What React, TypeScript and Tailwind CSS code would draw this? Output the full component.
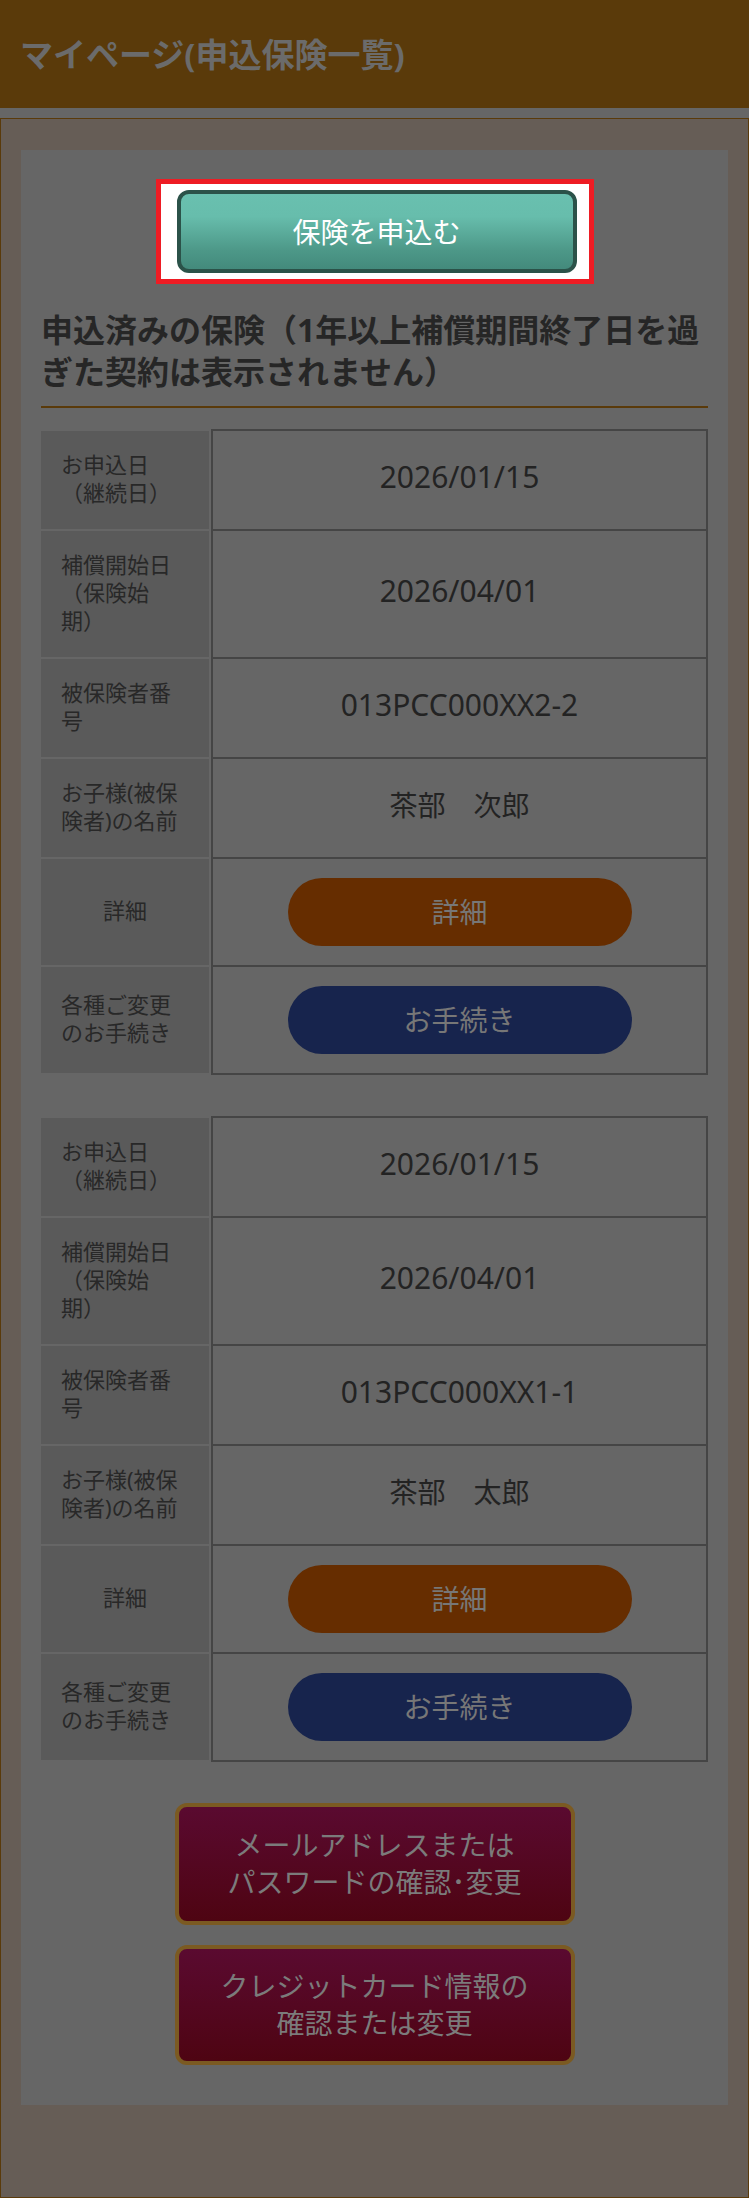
import React from "react";

type Rec = { date: string; start: string; id: string; name: string };

const records: Rec[] = [
  { date: "2026/01/15", start: "2026/04/01", id: "013PCC000XX2-2", name: "茶部　次郎" },
  { date: "2026/01/15", start: "2026/04/01", id: "013PCC000XX1-1", name: "茶部　太郎" },
];

function Row({
  label,
  centerLabel,
  last,
  children,
}: {
  label: string;
  centerLabel?: boolean;
  last?: boolean;
  children: React.ReactNode;
}) {
  return (
    <div className="flex">
      <div
        className={`w-[168px] shrink-0 mt-[2px] ${last ? "mb-[2px]" : ""} bg-[#5a5a5a] px-[20px] pt-[19px] pb-[23px] text-[22px] leading-[28px] text-[#282828] flex flex-col justify-center ${centerLabel ? "text-center" : "text-left"}`}
      >
        {label}
      </div>
      <div
        className={`ml-[2px] flex-1 border-x-2 border-t-2 ${last ? "border-b-2" : ""} border-[#454545] bg-[#666666] flex items-center justify-center px-[20px] pt-[19px] pb-[19px]`}
      >
        {children}
      </div>
    </div>
  );
}

function Val({ children, small }: { children: React.ReactNode; small?: boolean }) {
  return (
    <span className={`${small ? "text-[28px]" : "text-[30px]"} leading-none text-[#232323] pb-[6px]`}>
      {children}
    </span>
  );
}

function Table({ r }: { r: Rec }) {
  return (
    <div className="flex flex-col">
      <Row label="お申込日（継続日）">
        <Val>{r.date}</Val>
      </Row>
      <Row label="補償開始日（保険始期）">
        <Val>{r.start}</Val>
      </Row>
      <Row label="被保険者番号">
        <Val>{r.id}</Val>
      </Row>
      <Row label="お子様(被保険者)の名前">
        <Val small>{r.name}</Val>
      </Row>
      <Row label="詳細" centerLabel>
        <div className="w-[344px] h-[68px] shrink-0 rounded-full bg-[#662d00] flex items-center justify-center text-[28px] text-[#777777]">
          詳細
        </div>
      </Row>
      <Row label="各種ご変更のお手続き" last>
        <div className="w-[344px] h-[68px] shrink-0 rounded-full bg-[#17244d] flex items-center justify-center text-[28px] text-[#777777]">
          お手続き
        </div>
      </Row>
    </div>
  );
}

export default function App() {
  return (
    <div
      className="w-[749px] bg-[#666666] [text-spacing-trim:space-all]"
      style={{ fontFamily: '"Noto Sans", "Noto Sans CJK JP", sans-serif' }}
    >
      <header className="h-[108px] bg-[#5a3a0a] flex items-center px-[20px]">
        <h1 className="text-[33px] font-bold leading-none text-[#6b6b6b]">マイページ(申込保険一覧)</h1>
      </header>
      <div className="h-[10px] bg-[#666666]" />
      <div className="border border-[#5a3a0a] bg-[#665d56] px-[20px] pt-[31px] pb-[92px]">
        <div className="bg-[#666666] px-[20px] pt-[29px] pb-[40px]">
          <div className="flex justify-center">
            <div className="border-[5px] border-[#ee1c24] bg-white pl-[16px] pr-[12px] py-[6px]">
              <div className="w-[400px] h-[83px] rounded-[12px] border-[4px] border-[#2b5249] bg-[linear-gradient(to_bottom,#69c0af_0%,#67bdac_30%,#4d9888_75%,#438a7c_100%)] flex items-center justify-center text-[28px] text-white">
                保険を申込む
              </div>
            </div>
          </div>
          <h2 className="mt-[25px] pb-[13px] border-b-2 border-[#5a3a0a] text-[32px] leading-[42px] font-bold text-[#262626]">
            申込済みの保険（1年以上補償期間終了日を過ぎた契約は表示されません）
          </h2>
          <div className="mt-[21px] flex flex-col gap-[41px]">
            {records.map((r, i) => (
              <Table key={i} r={r} />
            ))}
          </div>
          <div className="mt-[41px] flex flex-col items-center gap-[20px]">
            <div className="w-[400px] rounded-[12px] border-[4px] border-[#7b5a22] bg-[linear-gradient(to_bottom,#5a0a30,#4e0412)] py-[20px] text-center text-[28px] leading-[37px] text-[#7b7b7b]">
              メールアドレスまたは
              <br />
              パスワードの確認･変更
            </div>
            <div className="w-[400px] rounded-[12px] border-[4px] border-[#7b5a22] bg-[linear-gradient(to_bottom,#5a0a30,#4e0412)] py-[19px] text-center text-[28px] leading-[37px] text-[#7b7b7b]">
              クレジットカード情報の
              <br />
              確認または変更
            </div>
          </div>
        </div>
      </div>
    </div>
  );
}
